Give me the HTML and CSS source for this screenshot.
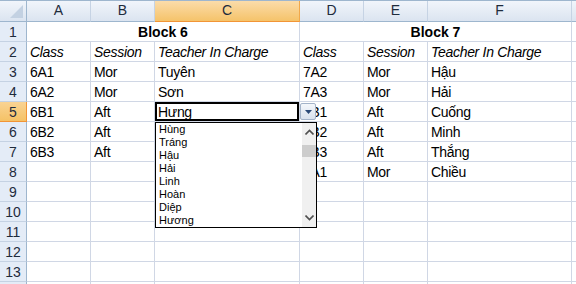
FILE: index.html
```html
<!DOCTYPE html>
<html lang="vi">
<head>
    <meta charset="UTF-8">
    <title>Block 6 / Block 7</title>
    <link rel="stylesheet" href="styles.css">
</head>
<body>

    <!-- Worksheet grid -->
    <div class="sheet">
        <div class="corner"><span class="corner-mark"></span></div>
        <div class="col-head">A</div>
        <div class="col-head">B</div>
        <div class="col-head on">C</div>
        <div class="col-head">D</div>
        <div class="col-head">E</div>
        <div class="col-head">F</div>
        <div class="col-head"></div>

        <div class="row-head">1</div>
        <div class="cell title span3">Block 6</div>
        <div class="cell title span3">Block 7</div>
        <div class="cell"></div>

        <div class="row-head">2</div>
        <div class="cell ital">Class</div>
        <div class="cell ital">Session</div>
        <div class="cell ital">Teacher In Charge</div>
        <div class="cell ital">Class</div>
        <div class="cell ital">Session</div>
        <div class="cell ital">Teacher In Charge</div>
        <div class="cell"></div>

        <div class="row-head">3</div>
        <div class="cell">6A1</div>
        <div class="cell">Mor</div>
        <div class="cell">Tuyên</div>
        <div class="cell">7A2</div>
        <div class="cell">Mor</div>
        <div class="cell">Hậu</div>
        <div class="cell"></div>

        <div class="row-head">4</div>
        <div class="cell">6A2</div>
        <div class="cell">Mor</div>
        <div class="cell">Sơn</div>
        <div class="cell">7A3</div>
        <div class="cell">Mor</div>
        <div class="cell">Hải</div>
        <div class="cell"></div>

        <div class="row-head on">5</div>
        <div class="cell">6B1</div>
        <div class="cell">Aft</div>
        <div class="cell active">Hưng</div>
        <div class="cell">7B1</div>
        <div class="cell">Aft</div>
        <div class="cell">Cuống</div>
        <div class="cell"></div>

        <div class="row-head">6</div>
        <div class="cell">6B2</div>
        <div class="cell">Aft</div>
        <div class="cell"></div>
        <div class="cell">7B2</div>
        <div class="cell">Aft</div>
        <div class="cell">Minh</div>
        <div class="cell"></div>

        <div class="row-head">7</div>
        <div class="cell">6B3</div>
        <div class="cell">Aft</div>
        <div class="cell"></div>
        <div class="cell">7B3</div>
        <div class="cell">Aft</div>
        <div class="cell">Thắng</div>
        <div class="cell"></div>

        <div class="row-head">8</div>
        <div class="cell"></div>
        <div class="cell"></div>
        <div class="cell"></div>
        <div class="cell">7A1</div>
        <div class="cell">Mor</div>
        <div class="cell">Chiều</div>
        <div class="cell"></div>

        <div class="row-head">9</div>
        <div class="cell"></div><div class="cell"></div><div class="cell"></div>
        <div class="cell"></div><div class="cell"></div><div class="cell"></div>
        <div class="cell"></div>

        <div class="row-head">10</div>
        <div class="cell"></div><div class="cell"></div><div class="cell"></div>
        <div class="cell"></div><div class="cell"></div><div class="cell"></div>
        <div class="cell"></div>

        <div class="row-head">11</div>
        <div class="cell"></div><div class="cell"></div><div class="cell"></div>
        <div class="cell"></div><div class="cell"></div><div class="cell"></div>
        <div class="cell"></div>

        <div class="row-head">12</div>
        <div class="cell"></div><div class="cell"></div><div class="cell"></div>
        <div class="cell"></div><div class="cell"></div><div class="cell"></div>
        <div class="cell"></div>

        <div class="row-head">13</div>
        <div class="cell"></div><div class="cell"></div><div class="cell"></div>
        <div class="cell"></div><div class="cell"></div><div class="cell"></div>
        <div class="cell"></div>

        <!-- only the top edge of row 14 fits in the window -->
        <div class="row-head"></div>
        <div class="cell"></div><div class="cell"></div><div class="cell"></div>
        <div class="cell"></div><div class="cell"></div><div class="cell"></div>
        <div class="cell"></div>

        <!-- Data validation arrow and open list -->
        <div class="drop-btn">
            <svg width="7" height="4" viewBox="0 0 7 4"><path d="M0 0h7L3.5 4z" fill="#2b4a78"/></svg>
        </div>
        <div class="drop-list">
            <ul class="items">
                <li>Hùng</li>
                <li>Tráng</li>
                <li>Hậu</li>
                <li>Hải</li>
                <li>Linh</li>
                <li>Hoàn</li>
                <li>Diệp</li>
                <li>Hương</li>
            </ul>
            <div class="scrollbar">
                <svg class="arrow" width="9" height="6" viewBox="0 0 9 6"><path d="M0.5 5.5L4.5 1.5L8.5 5.5" fill="none" stroke="#505050" stroke-width="1.6"/></svg>
                <div class="track"><div class="thumb"></div></div>
                <svg class="arrow" width="9" height="6" viewBox="0 0 9 6"><path d="M0.5 0.5L4.5 4.5L8.5 0.5" fill="none" stroke="#505050" stroke-width="1.6"/></svg>
            </div>
        </div>
    </div>

</body>
</html>
```

FILE: styles.css
```css
/* Page */
body {
    margin: 0;
    background: #fff;
    font-family: 'Liberation Sans', Arial, sans-serif;
    overflow: hidden;
}

/* Worksheet grid: row header + columns A..F + a sliver of G */
.sheet {
    position: relative;
    display: grid;
    grid-template-columns: 27px 64px 64px 145px 64px 64px 144px 1fr;
    grid-template-rows: 21px;
    grid-auto-rows: 20px;
    height: 284px;
    overflow: hidden;
    box-sizing: border-box;
    border-top: 1px solid #9eb6ce;
}

/* Column headers */
.corner,
.col-head {
    box-sizing: border-box;
    background: linear-gradient(#f1f5fb, #dbe4f0);
    border-bottom: 1px solid #9eb6ce;
    border-right: 1px solid #c6d3e4;
    color: #1e2b3c;
    font-size: 14px;
    text-align: center;
    line-height: 19px;
}

.corner {
    position: relative;
    border-right-color: #9eb6ce;
}

.corner-mark {
    position: absolute;
    right: 3px;
    bottom: 3px;
    width: 0;
    height: 0;
    border-left: 13px solid transparent;
    border-bottom: 13px solid #c3d1e2;
}

.col-head.on {
    background: linear-gradient(#fbdcaa, #f5c36a);
    border-right-color: #f2a84a;
    border-bottom-color: #f29536;
}

/* Row headers */
.row-head {
    box-sizing: border-box;
    background: #e4ecf7;
    border-right: 1px solid #9eb6ce;
    border-bottom: 1px solid #c5d2e3;
    color: #1e2b3c;
    font-size: 14px;
    text-align: center;
    line-height: 20px;
}

.row-head.on {
    background: linear-gradient(#f9d393, #f5c266);
    border-bottom-color: #f29536;
    border-right-color: #f29536;
}

/* Cells */
.cell {
    box-sizing: border-box;
    border-right: 1px solid #d0d7e5;
    border-bottom: 1px solid #d0d7e5;
    padding: 0 3px;
    font-size: 14px;
    letter-spacing: -0.3px;
    line-height: 20px;
    color: #000;
    white-space: nowrap;
    overflow: hidden;
}

.cell.span3 {
    grid-column: span 3;
}

.cell.title {
    font-weight: bold;
    text-align: center;
    letter-spacing: 0;
}

.cell.ital {
    font-style: italic;
}

.cell.active {
    box-shadow: inset 0 0 0 2px #000;
}

/* Dropdown arrow next to the active cell */
.drop-btn {
    position: absolute;
    left: 300px;
    top: 102px;
    box-sizing: border-box;
    width: 16px;
    height: 17px;
    border: 1px solid #a3b3c9;
    border-radius: 2px;
    background: linear-gradient(#f4f7fb, #d9e2ee);
    display: flex;
    align-items: center;
    justify-content: center;
}

/* Opened validation list */
.drop-list {
    position: absolute;
    left: 155px;
    top: 121px;
    box-sizing: border-box;
    width: 162px;
    height: 106px;
    border: 1px solid #000;
    background: #fff;
    display: flex;
}

.items {
    flex: 1;
    list-style: none;
    margin: 0;
    padding: 0 0 0 3px;
    font-family: 'Liberation Sans', Tahoma, sans-serif;
    font-size: 11px;
    line-height: 13px;
    color: #000;
}

.scrollbar {
    width: 14px;
    background: #f0f0f0;
    display: flex;
    flex-direction: column;
    align-items: center;
    padding: 6px 0 6px;
}

.scrollbar .track {
    flex: 1;
    width: 100%;
    padding-top: 10px;
}

.scrollbar .thumb {
    height: 12px;
    background: #cdcdcd;
}
```
